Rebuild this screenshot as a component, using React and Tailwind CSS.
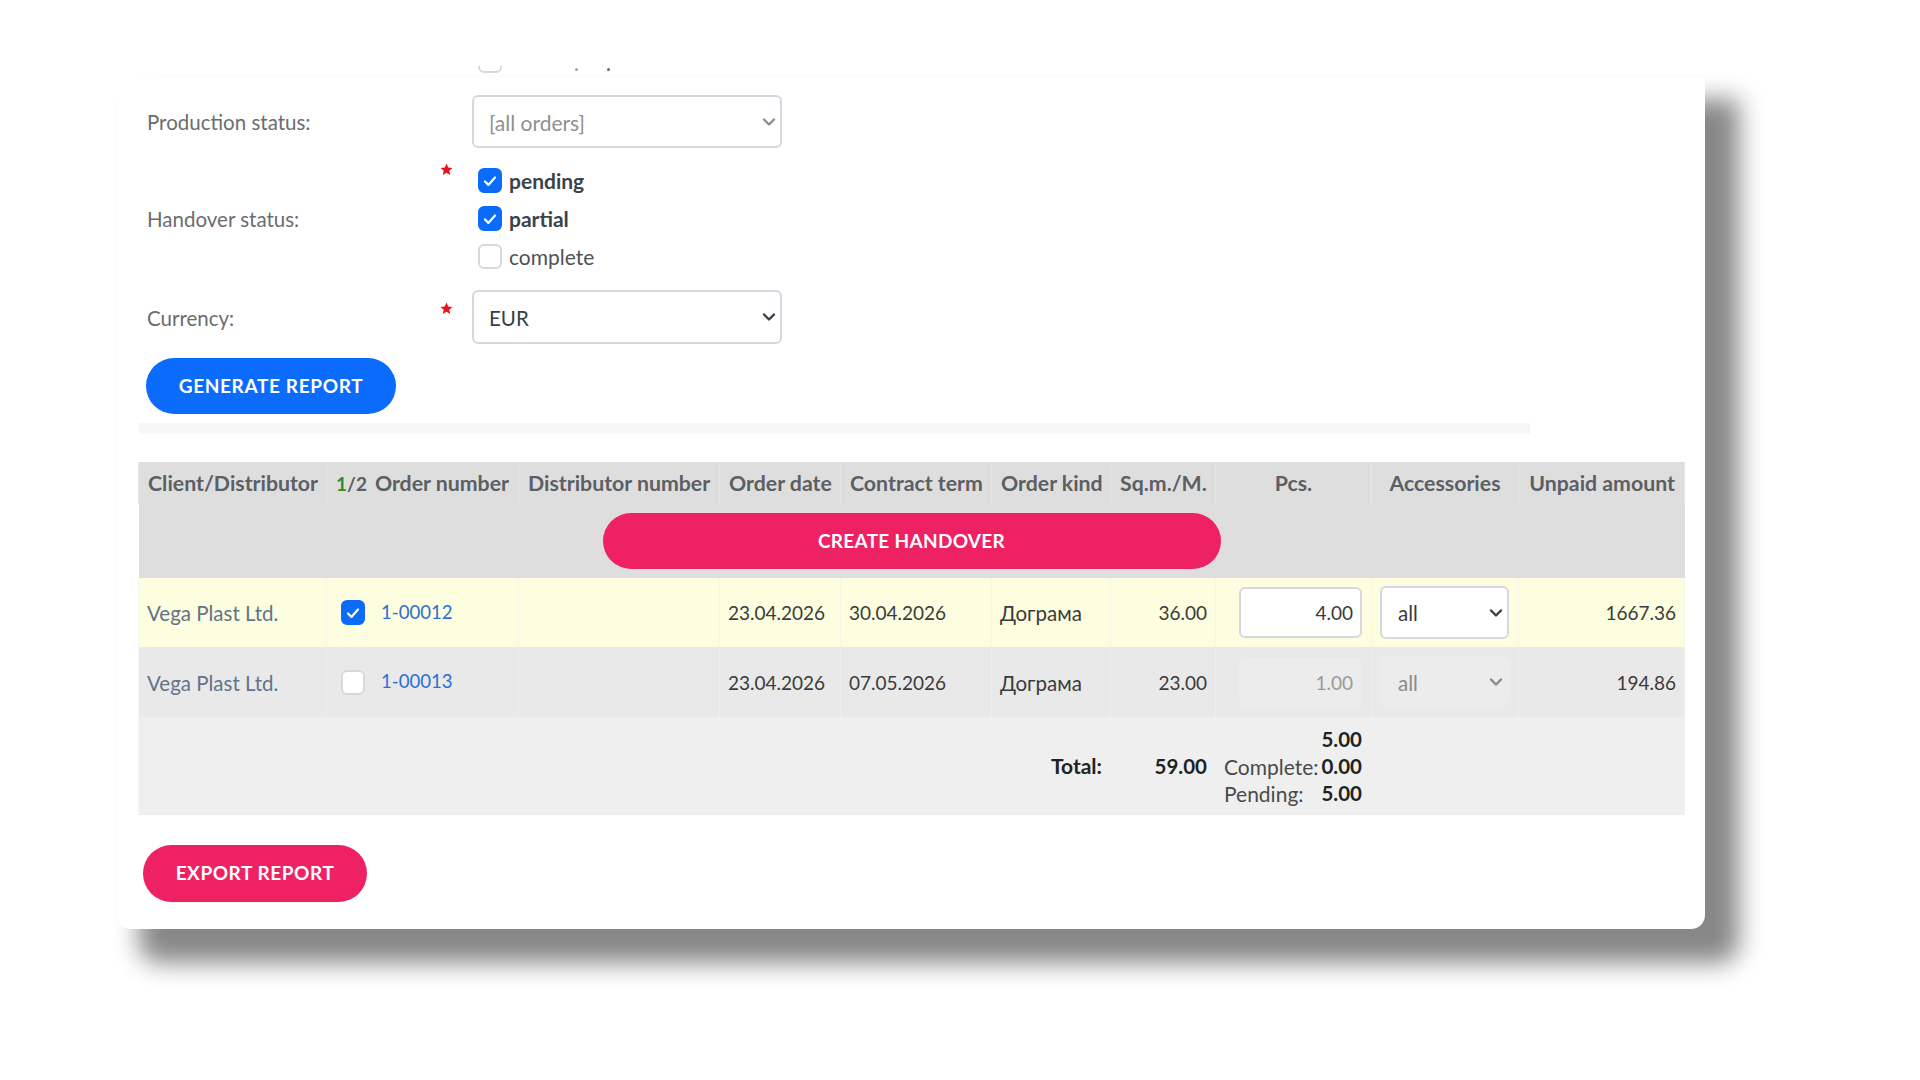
import React from "react";

const Box = ({ checked, className = "" }) => (
  <span
    className={`flex h-[25px] w-[24px] shrink-0 items-center justify-center rounded-[6px] border-2 ${
      checked ? "border-[#0b6bfa] bg-[#0b6bfa]" : "border-[#d5d9df] bg-white"
    } ${className}`}
  >
    {checked && (
      <svg viewBox="0 0 20 20" className="h-[20px] w-[20px]" fill="none" stroke="white" strokeWidth="2.2" strokeLinecap="round" strokeLinejoin="round">
        <path d="M5 10.5l3.4 3.4L15 6.5" />
      </svg>
    )}
  </span>
);

const Star = ({ className = "" }) => (
  <span className={`block h-[13px] w-[32px] shrink-0 ${className}`}>
    <svg viewBox="0 0 24 24" className="h-[13px] w-[13px]" fill="#e8141c">
      <path d="M12 1l3.2 7.4 7.8.7-5.9 5.2 1.8 7.9L12 18.1l-6.9 4.1 1.8-7.9L1 9.1l7.8-.7z" />
    </svg>
  </span>
);

const Chevron = ({ color }) => (
  <svg viewBox="0 0 14 14" className="pointer-events-none absolute top-1/2 right-[6px] h-[14px] w-[14px] -translate-y-1/2" fill="none" stroke={color} strokeWidth="2.4" strokeLinecap="round" strokeLinejoin="round">
    <path d="M2 4.5l5 5 5-5" />
  </svg>
);

const Select = ({ value, disabled, color, wrap, className }) => (
  <div className={`relative ${wrap}`}>
    <select disabled={disabled} className={`block h-full w-full appearance-none rounded-[6px] border-2 pt-[2px] ${className}`}>
      <option>{value}</option>
    </select>
    <Chevron color={color} />
  </div>
);

const Head = ({ children, className = "" }) => (
  <th className={`border-x border-[#e6e6e6] px-[9px] pt-[2px] text-[21.3px] font-bold whitespace-nowrap text-[#5c5f63] ${className}`}>{children}</th>
);

const Cell = ({ children, className = "", colSpan, flat }) => (
  <td colSpan={colSpan} className={`border-x border-[#f1f1ec]/60 px-[8px] text-[19px] whitespace-nowrap text-[#3b3b3b] ${flat ? "" : "pt-[2px]"} ${className}`}>{children}</td>
);

const OrderRow = ({ number, term, sqm, pcs, unpaid, active }) => (
  <tr className={active ? "h-[69px] bg-[#fdfddf]" : "h-[70px] bg-[#e9e9ea]"}>
    <Cell className="text-[20.5px] text-[#62748a]">Vega Plast Ltd.</Cell>
    <Cell flat>
      <div className="flex items-center pl-[6px]">
        <Box checked={active} className="mt-[1px]" />
        <a className="ml-[16px] text-[18.6px] text-[#2d6fd8]">{number}</a>
      </div>
    </Cell>
    <Cell />
    <Cell>23.04.2026</Cell>
    <Cell>{term}</Cell>
    <Cell className="text-[20.5px]">Дограма</Cell>
    <Cell className="text-right">{sqm}</Cell>
    <Cell flat className="pr-[9px]">
      <input
        readOnly
        value={pcs}
        disabled={!active}
        className={`ml-auto block w-[123px] rounded-[6px] border-2 px-[7px] text-right text-[19px] ${
          active ? "h-[51px] border-[#d5d9df] bg-white text-[#3b3b3b]" : "h-[49px] border-[#ececec] bg-[#ececec] text-[#9a9a9a]"
        }`}
      />
    </Cell>
    <Cell flat className="px-[7px]">
      <Select
        value="all"
        disabled={!active}
        color={active ? "#3a3f44" : "#8a8a8a"}
        wrap={`w-[129px] ${active ? "h-[53px]" : "h-[50px]"}`}
        className={`pl-[16px] text-[20.5px] ${active ? "border-[#d5d9df] bg-white text-[#3b3b3b]" : "border-[#ececec] bg-[#ececec] text-[#8a8a8a] opacity-100"}`}
      />
    </Cell>
    <Cell className="text-right">{unpaid}</Cell>
  </tr>
);

export default function App() {
  return (
    <div className="min-h-screen overflow-hidden bg-white font-['Lato','Noto_Sans',sans-serif]">
      <div className="mt-[77px] ml-[117px] flow-root h-[852px] w-[1588px] rounded-b-[14px] bg-white shadow-[28px_28px_24px_6px_#888888]">
        {/* row cut off by the top of the crop */}
        <div className="-mt-[11px] flex h-[7px] items-end overflow-hidden pl-[361px]">
          <Box />
          <span className="mb-[2px] ml-[73px] h-[3px] w-[3px] rounded-full bg-[#9aa0a6]" />
          <span className="mb-[2px] ml-[29px] h-[3px] w-[3px] rounded-full bg-[#5c6b7a]" />
        </div>

        <div className="flex pt-[22px] pl-[30px]">
          <label className="flex h-[53px] w-[325px] items-center pt-[2px] text-[20.5px] text-[#6a6d70]">Production status:</label>
          <Select
            value="[all orders]"
            color="#8f8f8f"
            wrap="h-[53px] w-[310px]"
            className="border-[#d5d9df] bg-white pl-[15px] text-[21px] text-[#8f8f8f]"
          />
        </div>

        <div className="mt-[20px] flex pl-[30px]">
          <label className="flex h-[101px] w-[293px] items-center pt-[2px] text-[20.5px] text-[#6a6d70]">Handover status:</label>
          <Star className="-mt-[5px]" />
          <div className="flex flex-col gap-[13px] pl-[6px]">
            <div className="flex h-[25px] items-center gap-[7px] text-[21px] font-bold text-[#3a434d]"><Box checked />pending</div>
            <div className="flex h-[25px] items-center gap-[7px] text-[21px] font-bold text-[#3a434d]"><Box checked />partial</div>
            <div className="flex h-[25px] items-center gap-[7px] text-[21px] text-[#4d5256]"><Box />complete</div>
          </div>
        </div>

        <div className="mt-[21px] flex pl-[30px]">
          <label className="flex h-[54px] w-[293px] items-center pt-[2px] text-[20.5px] text-[#6a6d70]">Currency:</label>
          <Star className="mt-[12px]" />
          <Select
            value="EUR"
            color="#3a3f44"
            wrap="h-[54px] w-[310px]"
            className="border-[#d5d9df] bg-white pl-[15px] text-[20.5px] text-[#3a3f44]"
          />
        </div>

        <button className="mt-[14px] ml-[29px] block h-[56px] w-[250px] rounded-full bg-[#0b6bfa] text-[19px] font-bold tracking-[0.65px] text-white">
          GENERATE REPORT
        </button>

        <div className="mt-[9px] ml-[22px] h-[11px] w-[1391px] bg-[#f6f7f8]" />

        <table className="mt-[28px] ml-[21px] w-[1546px] table-fixed border-collapse">
          <colgroup>
            <col className="w-[188px]" />
            <col className="w-[192px]" />
            <col className="w-[201px]" />
            <col className="w-[121px]" />
            <col className="w-[151px]" />
            <col className="w-[119px]" />
            <col className="w-[105px]" />
            <col className="w-[156px]" />
            <col className="w-[147px]" />
            <col className="w-[166px]" />
          </colgroup>
          <thead>
            <tr className="h-[42px] bg-[#dedede]">
              <Head className="text-left">Client/Distributor</Head>
              <Head>
                <div className="flex items-baseline justify-between">
                  <span className="text-[19px]"><span className="text-[#2e8b2e]">1</span>/2</span>
                  <span>Order number</span>
                </div>
              </Head>
              <Head className="text-center">Distributor number</Head>
              <Head className="text-left">Order date</Head>
              <Head className="text-left">Contract term</Head>
              <Head className="text-left">Order kind</Head>
              <Head className="text-left">Sq.m./M.</Head>
              <Head className="text-center">Pcs.</Head>
              <Head className="text-center">Accessories</Head>
              <Head className="text-right">Unpaid amount</Head>
            </tr>
          </thead>
          <tbody>
            <tr className="h-[74px] bg-[#dedede]">
              <td colSpan={10} className="text-center">
                <button className="h-[56px] w-[618px] rounded-full bg-[#ee2163] text-[19px] font-bold tracking-[0.3px] text-white">
                  CREATE HANDOVER
                </button>
              </td>
            </tr>
            <OrderRow active number="1-00012" term="30.04.2026" sqm="36.00" pcs="4.00" unpaid="1667.36" />
            <OrderRow number="1-00013" term="07.05.2026" sqm="23.00" pcs="1.00" unpaid="194.86" />
            <tr className="h-[98px] bg-[#efefef]">
              <Cell colSpan={6} flat className="text-right text-[21px] font-bold text-[#222222]">Total:</Cell>
              <Cell flat className="text-right text-[20.5px] font-bold text-[#222222]">59.00</Cell>
              <Cell flat className="pr-[9px]">
                <div className="grid grid-cols-[auto_auto] justify-between leading-[27px]">
                  <span />
                  <b className="text-right text-[20.5px] text-[#222222]">5.00</b>
                  <span className="text-[21px] text-[#4a4a4a]">Complete:</span>
                  <b className="text-right text-[20.5px] text-[#222222]">0.00</b>
                  <span className="text-[21px] text-[#4a4a4a]">Pending:</span>
                  <b className="text-right text-[20.5px] text-[#222222]">5.00</b>
                </div>
              </Cell>
              <Cell />
              <Cell />
            </tr>
          </tbody>
        </table>

        <button className="mt-[30px] ml-[26px] block h-[57px] w-[224px] rounded-full bg-[#ee2163] text-[19px] font-bold tracking-[0.55px] text-white">
          EXPORT REPORT
        </button>
      </div>
    </div>
  );
}
